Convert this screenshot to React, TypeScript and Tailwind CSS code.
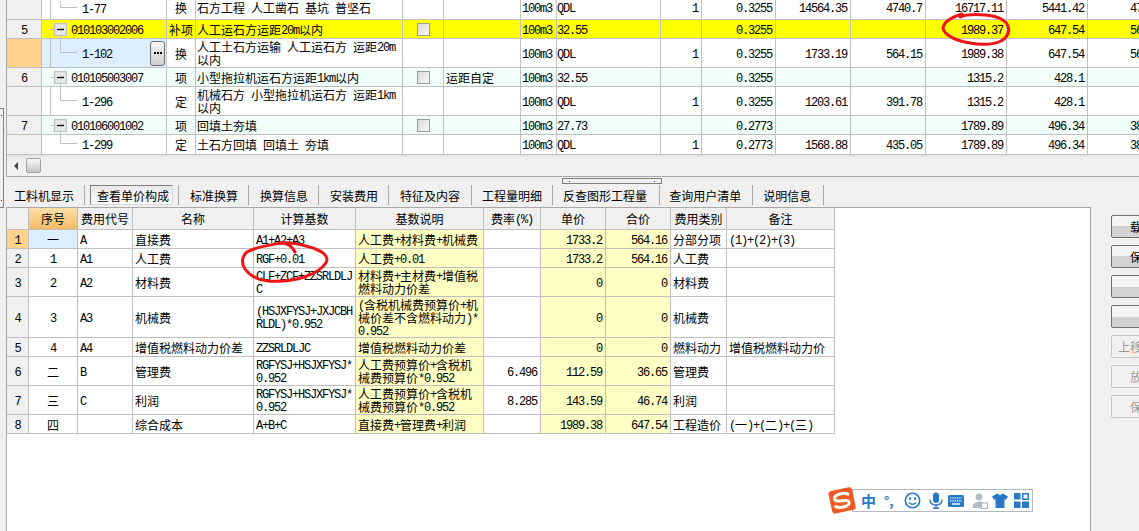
import React from "react";

const GRID = "border-r border-b border-[#c0c0c0]";
const LATIN = "font-['Liberation_Mono',monospace] tracking-[-1.2px] leading-[0] align-[1px]";

// Mixed Chinese/ASCII strings: ASCII runs take a half-em monospaced advance.
function T({ s }: { s: string }) {
  return (
    <>
      {s.split(/([\x20-\x7e]+)/).map((part, i) =>
        /^[\x20-\x7e]+$/.test(part) ? (
          <span key={i} className={LATIN}>
            {part}
          </span>
        ) : (
          part
        ),
      )}
    </>
  );
}

type BillRow = {
  h: string;
  px: number;
  no?: string;
  code: string;
  parent?: boolean;
  last?: boolean;
  type: string;
  name: string;
  check?: boolean;
  note?: string;
  qty: string;
  one?: string;
  amount: string;
  price?: string;
  labour?: string;
  total: string;
  sum: string;
  rest?: string;
  bg: string;
  active?: boolean;
};

const billRows: BillRow[] = [
  { h: "h-[20px] [&>td]:pt-[1px] [&>td]:align-top", px: 15, code: "1-77", type: "换", name: "石方工程 人工凿石 基坑 普坚石", qty: "QDL", one: "1", amount: "0.3255", price: "14564.35", labour: "4740.7", total: "16717.11", sum: "5441.42", rest: "47", bg: "bg-white" },
  { h: "h-[19px]", px: 18, no: "5", code: "010103002006", parent: true, type: "补项", name: "人工运石方运距20m以内", check: true, qty: "32.55", amount: "0.3255", total: "1989.37", sum: "647.54", rest: "56", bg: "bg-[#ffff00]" },
  { h: "h-[29px]", px: 28, code: "1-102", type: "换", name: "人工土石方运输 人工运石方 运距20m以内", qty: "QDL", one: "1", amount: "0.3255", price: "1733.19", labour: "564.15", total: "1989.38", sum: "647.54", rest: "56", bg: "bg-white", active: true },
  { h: "h-[19px]", px: 18, no: "6", code: "010105003007", parent: true, type: "项", name: "小型拖拉机运石方运距1km以内", check: true, note: "运距自定", qty: "32.55", amount: "0.3255", total: "1315.2", sum: "428.1", bg: "bg-[#f0fffa]" },
  { h: "h-[29px]", px: 28, code: "1-296", type: "定", name: "机械石方 小型拖拉机运石方 运距1km以内", qty: "QDL", one: "1", amount: "0.3255", price: "1203.61", labour: "391.78", total: "1315.2", sum: "428.1", bg: "bg-white" },
  { h: "h-[19px]", px: 18, no: "7", code: "010106001002", parent: true, type: "项", name: "回填土夯填", check: true, qty: "27.73", amount: "0.2773", total: "1789.89", sum: "496.34", rest: "38", bg: "bg-[#f0fffa]" },
  { h: "h-[20px]", px: 19, code: "1-299", last: true, type: "定", name: "土石方回填 回填土 夯填", qty: "QDL", one: "1", amount: "0.2773", price: "1568.88", labour: "435.05", total: "1789.89", sum: "496.34", rest: "38", bg: "bg-white" },
];

function ExpandBox() {
  return (
    <svg width="17" height="18" className="shrink-0">
      <path d="M0 9.5H4M10.5 15V18" stroke="#c0c0c0" fill="none" />
      <rect x="4.5" y="3.5" width="12" height="12" fill="#e8e8e8" stroke="#c4c4c4" strokeWidth="1.4" />
      <path d="M7 9.5H14" stroke="#111" strokeWidth="1.4" />
    </svg>
  );
}

function Checkbox() {
  return (
    <span className="mx-auto block h-[13px] w-[13px] border border-[#9a9a9a] bg-gradient-to-br from-[#d8d8d8] to-[#fafafa]" />
  );
}

function BillTable() {
  const num = `${GRID} p-0 pr-[3px] text-right`;
  return (
    <table className="w-[1193px] table-fixed border-separate border-spacing-0">
      <colgroup>
        {[35, 9, 116, 29, 207, 41, 77, 36, 104, 41, 74, 75, 75, 81, 81, 112].map((w, i) => (
          <col key={i} style={{ width: w }} />
        ))}
      </colgroup>
      <tbody>
        {billRows.map((r) => (
          <tr key={r.code} className={`${r.h} ${r.bg}`}>
            <td className={`${GRID} p-0 text-center ${r.active ? "bg-[#ffd28c]" : "bg-[#f0f0f0]"}`}>
              {r.no && <T s={r.no} />}
            </td>
            {r.parent ? (
              <td colSpan={2} className={`${GRID} p-0`}>
                <div className="flex items-center pl-[8px]">
                  <ExpandBox />
                  <span className="ml-[4px]">
                    <T s={r.code} />
                  </span>
                </div>
              </td>
            ) : (
              <>
                <td className={`border-b border-[#c0c0c0] p-0 ${r.last ? "" : "border-r"} ${r.active ? "bg-[#ddeeff]" : ""}`} />
                <td className={`${GRID} p-0 ${r.active ? "bg-[#ddeeff]" : ""}`}>
                  <div className="flex items-center">
                    <svg width="26" height={r.px} className="shrink-0">
                      <path d={`M9.5 0V${Math.floor(r.px / 2) - 0.5}H26`} stroke="#c0c0c0" fill="none" />
                    </svg>
                    <span className="ml-[5px]">
                      <T s={r.code} />
                    </span>
                    {r.active && (
                      <span className="mr-[1px] ml-auto flex h-[25px] w-[15px] items-center justify-center rounded-[3px] border border-[#707070] bg-gradient-to-b from-[#f6f6f6] to-[#cfcfcf] text-[11px] leading-none font-bold">
                        <span className="flex gap-[1px]">
                          <i className="h-[2px] w-[2px] bg-black" />
                          <i className="h-[2px] w-[2px] bg-black" />
                          <i className="h-[2px] w-[2px] bg-black" />
                        </span>
                      </span>
                    )}
                  </div>
                </td>
              </>
            )}
            <td className={`${GRID} p-0 text-center`}>{r.type}</td>
            <td className={`${GRID} p-0 pl-[1px] break-all`}>
              <T s={r.name} />
            </td>
            <td className={`${GRID} p-0`}>{r.check && <Checkbox />}</td>
            <td className={`${GRID} p-0 pl-[2px]`}>{r.note}</td>
            <td className={`${GRID} p-0 pl-[1px]`}>
              <T s="100m3" />
            </td>
            <td className={`${GRID} p-0`}>
              <T s={r.qty} />
            </td>
            <td className={num}>{r.one && <T s={r.one} />}</td>
            <td className={num}>
              <T s={r.amount} />
            </td>
            <td className={num}>{r.price && <T s={r.price} />}</td>
            <td className={num}>{r.labour && <T s={r.labour} />}</td>
            <td className={num}>
              <T s={r.total} />
            </td>
            <td className={num}>
              <T s={r.sum} />
            </td>
            <td className={`${GRID} p-0 pl-[42px]`}>{r.rest && <T s={r.rest} />}</td>
          </tr>
        ))}
      </tbody>
    </table>
  );
}

const tabs = [
  { label: "工料机显示", cls: "pl-[8px] pr-[10px]" },
  { label: "查看单价构成", cls: "px-[5px]", on: true },
  { label: "标准换算", cls: "pl-[11px] pr-[10px]" },
  { label: "换算信息", cls: "pl-[11px] pr-[10px]" },
  { label: "安装费用", cls: "pl-[11px] pr-[10px]" },
  { label: "特征及内容", cls: "pl-[11px] pr-[11px]" },
  { label: "工程量明细", cls: "pl-[10px] pr-[10px]" },
  { label: "反查图形工程量", cls: "pl-[10px] pr-[12px]" },
  { label: "查询用户清单", cls: "pl-[9px] pr-[11px]" },
  { label: "说明信息", cls: "pl-[10px] pr-[12px]" },
];

type CostRow = {
  h: string;
  n: string;
  seq: string;
  code: string;
  name: string;
  base: string;
  desc: string;
  rate?: string;
  unit?: string;
  sum?: string;
  kind: string;
  memo?: string;
};

const costRows: CostRow[] = [
  { h: "h-[19px]", n: "1", seq: "一", code: "A", name: "直接费", base: "A1+A2+A3", desc: "人工费+材料费+机械费", unit: "1733.2", sum: "564.16", kind: "分部分项", memo: "(1)+(2)+(3)" },
  { h: "h-[19px]", n: "2", seq: "1", code: "A1", name: "人工费", base: "RGF+0.01", desc: "人工费+0.01", unit: "1733.2", sum: "564.16", kind: "人工费" },
  { h: "h-[29px]", n: "3", seq: "2", code: "A2", name: "材料费", base: "CLF+ZCF+ZZSRLDLJC", desc: "材料费+主材费+增值税燃料动力价差", unit: "0", sum: "0", kind: "材料费" },
  { h: "h-[41px]", n: "4", seq: "3", code: "A3", name: "机械费", base: "(HSJXFYSJ+JXJCBHRLDL)*0.952", desc: "(含税机械费预算价+机械价差不含燃料动力)*0.952", unit: "0", sum: "0", kind: "机械费" },
  { h: "h-[19px]", n: "5", seq: "4", code: "A4", name: "增值税燃料动力价差", base: "ZZSRLDLJC", desc: "增值税燃料动力价差", unit: "0", sum: "0", kind: "燃料动力", memo: "增值税燃料动力价" },
  { h: "h-[29px]", n: "6", seq: "二", code: "B", name: "管理费", base: "RGFYSJ+HSJXFYSJ*0.952", desc: "人工费预算价+含税机械费预算价*0.952", rate: "6.496", unit: "112.59", sum: "36.65", kind: "管理费" },
  { h: "h-[29px]", n: "7", seq: "三", code: "C", name: "利润", base: "RGFYSJ+HSJXFYSJ*0.952", desc: "人工费预算价+含税机械费预算价*0.952", rate: "8.285", unit: "143.59", sum: "46.74", kind: "利润" },
  { h: "h-[19px]", n: "8", seq: "四", code: "", name: "综合成本", base: "A+B+C", desc: "直接费+管理费+利润", unit: "1989.38", sum: "647.54", kind: "工程造价", memo: "(一)+(二)+(三)" },
];

function CostTable() {
  const headers = ["费用代号", "名称", "计算基数", "基数说明", "费率(%)", "单价", "合价", "费用类别", "备注"];
  const yellowNum = `${GRID} bg-[#ffffc4] p-0 pr-[3px] text-right`;
  return (
    <table className="w-[828px] table-fixed border-separate border-spacing-0">
      <colgroup>
        {[22, 49, 55, 121, 102, 128, 57, 65, 65, 56, 108].map((w, i) => (
          <col key={i} style={{ width: w }} />
        ))}
      </colgroup>
      <thead>
        <tr className="h-[22px]">
          <th className={`${GRID} bg-[#f0f0f0] p-0`} />
          <th className={`${GRID} bg-gradient-to-b from-[#fbdfa6] to-[#f3ba66] p-0 font-normal`}>序号</th>
          {headers.map((h) => (
            <th key={h} className={`${GRID} bg-[#f0f0f0] p-0 font-normal`}>
              <T s={h} />
            </th>
          ))}
        </tr>
      </thead>
      <tbody>
        {costRows.map((r, i) => (
          <tr key={r.n} className={r.h}>
            <td className={`${GRID} p-0 text-center ${i === 0 ? "bg-[#ffd28c]" : "bg-[#f0f0f0]"}`}>
              <T s={r.n} />
            </td>
            <td className={`${GRID} p-0 text-center ${i === 0 ? "bg-[#ddeeff]" : ""}`}>
              <T s={r.seq} />
            </td>
            <td className={`${GRID} p-0 pl-[2px]`}>
              <T s={r.code} />
            </td>
            <td className={`${GRID} p-0 pl-[2px]`}>{r.name}</td>
            <td className={`${GRID} p-0 pl-[2px] break-all`}>
              <T s={r.base} />
            </td>
            <td className={`${GRID} bg-[#ffffc4] p-0 pl-[2px] break-all`}>
              <T s={r.desc} />
            </td>
            <td className={`${GRID} p-0 pr-[3px] text-right`}>{r.rate && <T s={r.rate} />}</td>
            <td className={yellowNum}>{r.unit && <T s={r.unit} />}</td>
            <td className={yellowNum}>{r.sum && <T s={r.sum} />}</td>
            <td className={`${GRID} p-0 pl-[2px]`}>{r.kind}</td>
            <td className={`${GRID} p-0 pl-[2px]`}>{r.memo && <T s={r.memo} />}</td>
          </tr>
        ))}
      </tbody>
    </table>
  );
}

const actions = [
  { label: "载入模板" },
  { label: "保存模板" },
  { label: "" },
  { label: "" },
  { label: "上移一行费用", off: true },
  { label: "放弃修改", off: true },
  { label: "保存修改", off: true },
];

function ImeBar() {
  const blue = "#2a79c9";
  return (
    <div className="absolute top-[486px] left-[827px] h-[27px] w-[207px]">
      <div className="mt-[3px] ml-[25px] flex h-[23px] w-[181px] items-center border border-[#b4b8c0] bg-white pl-[8px]">
        <span className="w-[15px] text-[15px] leading-none font-bold text-[#2a79c9]">中</span>
        <span className="ml-[8px] w-[12px] text-[13px] leading-none font-bold text-[#2a79c9]">°,</span>
        <svg width="17" height="17" viewBox="0 0 17 17" className="ml-[8px]">
          <circle cx="8.5" cy="8.5" r="7.2" fill="none" stroke={blue} strokeWidth="1.6" />
          <path d="M6 5v3M11 5v3" stroke={blue} strokeWidth="1.6" />
          <path d="M4.8 10.5q3.7 3.6 7.4 0" fill="none" stroke={blue} strokeWidth="1.4" />
        </svg>
        <svg width="14" height="17" viewBox="0 0 14 17" className="ml-[8px]">
          <rect x="4" y="0.5" width="6" height="10.5" rx="3" fill={blue} />
          <path d="M1 7.5q0 5.5 6 5.5t6-5.5M7 13v3M4 16.2h6" fill="none" stroke={blue} strokeWidth="1.4" />
        </svg>
        <svg width="16" height="12" viewBox="0 0 16 12" className="ml-[5px]">
          <rect width="16" height="12" rx="1.5" fill={blue} />
          <path d="M2 3h12M2 5.8h12" stroke="#fff" strokeWidth="1.2" strokeDasharray="1.4 0.9" />
          <path d="M4 9h8" stroke="#fff" strokeWidth="1.4" />
        </svg>
        <svg width="16" height="16" viewBox="0 0 16 16" className="ml-[8px]">
          <circle cx="7" cy="4" r="3.4" fill="#b4bcc6" />
          <path d="M0.5 15q0-6.5 6.5-6.5 2 0 3 .6V15z" fill="#b4bcc6" />
          <rect x="9.5" y="10" width="6" height="5.5" fill="#fff" stroke="#a8b0ba" />
        </svg>
        <svg width="16" height="15" viewBox="0 0 16 15" className="ml-[4px]">
          <path d="M5 0.5 8 2l3-1.5 5 3-2 3.2-1.5-.8V15h-9V5.9L2 6.7 0 3.5z" fill={blue} />
        </svg>
        <svg width="15" height="15" viewBox="0 0 15 15" className="ml-[6px]">
          <rect x="0" y="0" width="6.5" height="6.5" fill={blue} />
          <rect x="8.75" y="0.75" width="5.5" height="5.5" fill="#fff" stroke={blue} strokeWidth="1.5" />
          <rect x="0" y="8.5" width="6.5" height="6.5" fill={blue} />
          <rect x="8" y="8.5" width="7" height="6.5" fill={blue} />
        </svg>
      </div>
      <svg width="30" height="29" viewBox="0 0 30 29" className="absolute top-0 left-0">
        <g transform="rotate(-12 15 14)">
          <rect x="3" y="3" width="24" height="23" rx="3" fill="#ee5a1f" />
          <path d="M22 9.5q-3-2.2-8-1.8-6 .6-6 3.8 0 3 7 3.2 7 .4 6.5 3.2-.5 3-6.500 3.200-4.500 .1-7.500-2" fill="none" stroke="#fff" strokeWidth="3" strokeLinecap="round" />
        </g>
      </svg>
    </div>
  );
}

export default function App() {
  return (
    <div className="relative flex h-[531px] w-[1139px] overflow-hidden bg-[#f0f0f0] font-['Noto_Sans_CJK_SC',sans-serif] text-[12px] leading-[13px] text-black">
      {/* Collapsed left pane with its splitter grip */}
      <div className="w-[6px] shrink-0">
        <div className="mt-[108px] flex h-[100px] w-[4px] flex-col items-center justify-between border-y border-r border-[#808080] py-[6px]">
          <i className="h-[1px] w-[1px] bg-[#2020a0]" />
          <i className="h-[1px] w-[1px] bg-[#2020a0]" />
        </div>
      </div>

      <div className="flex w-[1133px] shrink-0 flex-col">
        {/* Bill of quantities grid */}
        <section className="h-[177px] overflow-hidden border-b border-l border-[#a8a8a8] bg-[#f0f0f0]">
          <BillTable />
          <div className="flex h-[21px] items-center bg-gradient-to-b from-[#e4e4e4] to-[#f0f0f0] to-20% pl-[7px]">
            <span className="h-0 w-0 border-y-[4px] border-r-[4px] border-y-transparent border-r-[#444]" />
            <span className="ml-[8px] h-[15px] w-[15px] rounded-[2px] border border-[#a0a0a0] bg-gradient-to-b from-[#f8f8f8] to-[#c4c4c4]" />
          </div>
        </section>

        {/* Horizontal splitter grip */}
        <div className="h-[7px]">
          <div className="mt-[1px] ml-[556px] flex h-[6px] w-[100px] items-center justify-between border border-[#808080] px-[6px]">
            <i className="h-[1px] w-[1px] bg-[#2020a0]" />
            <i className="h-[1px] w-[1px] bg-[#2020a0]" />
          </div>
        </div>

        {/* Detail tabs */}
        <nav className="flex h-[23px] items-start pt-[1px]">
          {tabs.map((t) => (
            <div key={t.label} className={`flex h-[20px] items-center border-r border-[#a8a8a8] ${t.cls}`}>
              {t.on ? (
                <span className="flex h-[20px] items-center border border-t-[#808080] border-r-[#d8d8d8] border-b-[#d8d8d8] border-l-[#808080] bg-gradient-to-b from-[#e8e8e8] to-[#fafafa] pr-[3px] pl-[6px]">
                  {t.label}
                </span>
              ) : (
                t.label
              )}
            </div>
          ))}
        </nav>

        {/* Unit price breakdown with its action column */}
        <div className="flex min-h-0 flex-1">
          <section className="w-[1085px] shrink-0 border-t border-r border-l border-[#a8a8a8] bg-white">
            <CostTable />
          </section>
          <div className="ml-[20px] flex w-[86px] shrink-0 flex-col gap-[7px] pt-[8px]">
            {actions.map((a, i) => (
              <button
                key={i}
                className={`flex h-[23px] w-[86px] shrink-0 items-center justify-center rounded-[2px] border whitespace-nowrap ${
                  a.off
                    ? "border-[#c4c4c4] bg-[#f0f0f0] text-[#9a9a9a]"
                    : "border-[#707070] bg-gradient-to-b from-[#f4f4f4] from-50% to-[#d2d2d2] to-50%"
                }`}
              >
                {a.label}
              </button>
            ))}
          </div>
        </div>
      </div>

      {/* Hand-drawn red marks over the figures */}
      <svg width="1139" height="531" className="pointer-events-none absolute top-0 left-0" fill="none" stroke="#f01414" strokeWidth="3" strokeLinecap="round" strokeLinejoin="round">
        <path d="M962 14C952 17 944 22 943 28C944 35 956 41 970 43C980 45 994 45 1001 41C1008 37 1010 31 1008 26C1005 19 997 16 985 15C975 14 967 14 960 17" />
        <path d="M295 252C292 246 287 243 281 243C270 245 255 247 247 252C242 256 241 263 245 269C250 276 258 280 268 281C280 282 296 280 307 276C320 271 327 264 327 259C326 253 318 249 306 246C296 243 288 242 279 243" />
      </svg>

      <ImeBar />
    </div>
  );
}
